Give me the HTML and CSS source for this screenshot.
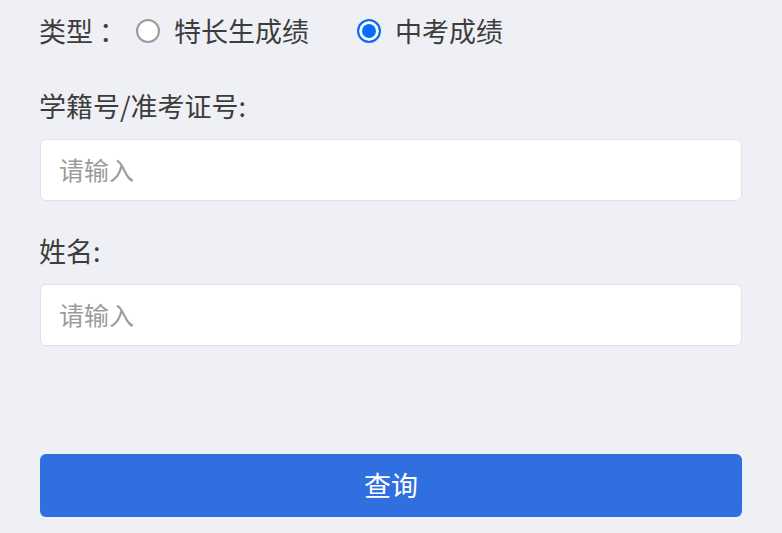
FILE: index.html
```html
<!DOCTYPE html>
<html lang="zh-CN">
<head>
<meta charset="utf-8">
<link rel="stylesheet" href="styles.css">
</head>
<body>
<form class="query-form">
  <div class="type-row">
    <span class="type-label">类型 ：</span>
    <label class="radio-option">
      <span class="radio"></span>
      <span class="radio-text">特长生成绩</span>
    </label>
    <label class="radio-option">
      <span class="radio checked"></span>
      <span class="radio-text">中考成绩</span>
    </label>
  </div>
  <div class="field field-first">
    <div class="field-label">学籍号/准考证号:</div>
    <div class="input">请输入</div>
  </div>
  <div class="field field-second">
    <div class="field-label">姓名:</div>
    <div class="input">请输入</div>
  </div>
  <div class="submit">查询</div>
</form>
</body>
</html>
```
FILE: styles.css
```css
html, body {
  margin: 0;
  padding: 0;
  background: #eff0f5;
}
body {
  font-family: "Noto Sans CJK SC", "Noto Sans", sans-serif;
  color: #3d3d3d;
  font-size: 27px;
}
.query-form {
  padding: 0 40px 0 39px;
}
.type-row {
  height: 62px;
  display: flex;
  align-items: center;
  line-height: 1;
  padding-bottom: 2px;
  box-sizing: border-box;
}
.type-label {
  width: 97px;
  white-space: pre;
}
.radio-option {
  display: flex;
  align-items: center;
  margin-right: 48px;
}
.radio {
  box-sizing: border-box;
  width: 24px;
  height: 24px;
  border-radius: 50%;
  border: 2px solid #9a9a9a;
  background: #fff;
  margin-right: 14px;
  margin-top: 2px;
}
.radio.checked {
  border: 2px solid #0a6cff;
  background: #0a6cff;
  box-shadow: inset 0 0 0 3px #fff;
}
.field-label {
  line-height: 40px;
  height: 40px;
}
.field-first {
  margin-top: 24px;
}
.field-second {
  margin-top: 30px;
}
.input {
  box-sizing: border-box;
  margin-top: 13px;
  margin-left: 1px;
  height: 62px;
  background: #fff;
  border: 1px solid #e2e3e8;
  border-radius: 6px;
  padding-left: 18px;
  padding-bottom: 3px;
  display: flex;
  align-items: center;
  color: #9b9b9b;
  font-size: 25px;
}
.field-second .input {
  margin-top: 13px;
}
.submit {
  margin-top: 108px;
  margin-left: 1px;
  height: 63px;
  padding-bottom: 3px;
  box-sizing: border-box;
  background: #2f6fdf;
  border-radius: 6px;
  color: #fff;
  display: flex;
  align-items: center;
  justify-content: center;
  font-size: 27px;
}
```
